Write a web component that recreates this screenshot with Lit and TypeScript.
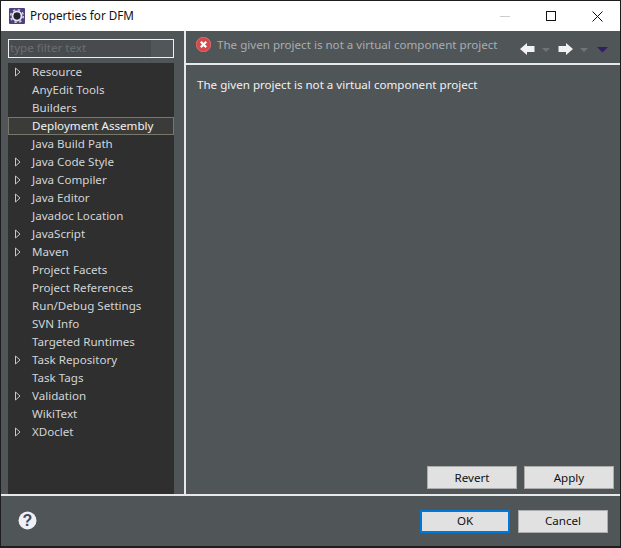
import { LitElement, html, css } from "lit";
import { customElement } from "lit/decorators.js";

const items: [string, boolean][] = [
  ["Resource", true], ["AnyEdit Tools", false], ["Builders", false], ["Deployment Assembly", false],
  ["Java Build Path", false], ["Java Code Style", true], ["Java Compiler", true], ["Java Editor", true],
  ["Javadoc Location", false], ["JavaScript", true], ["Maven", true], ["Project Facets", false],
  ["Project References", false], ["Run/Debug Settings", false], ["SVN Info", false], ["Targeted Runtimes", false],
  ["Task Repository", true], ["Task Tags", false], ["Validation", true], ["WikiText", false], ["XDoclet", true],
];

const MSG = "The given project is not a virtual component project";

@customElement("app-root")
export class AppRoot extends LitElement {
  static styles = css`
    :host { display: block; width: 621px; height: 548px; font-family: "Noto Sans", "Open Sans", sans-serif; font-size: 11.6px; color: #e6e8ea; }
    .win { box-sizing: border-box; width: 621px; height: 548px; background: #505558; border: 1px solid #1e1e1e; border-bottom-width: 2px; display: flex; flex-direction: column; }
    .title { height: 30px; background: #fff; display: flex; align-items: center; flex: none; color: #111; padding-left: 8px; }
    .title .name { flex: 1; margin: 0 0 2px 5px; font-size: 11.7px; }
    .ctl { width: 46px; height: 30px; display: flex; align-items: center; justify-content: center; }
    .main { flex: 1; min-height: 0; display: flex; border-bottom: 2px solid #e8e8e8; }
    .left { box-sizing: border-box; padding: 8px 0 0 7px; flex: none; display: flex; flex-direction: column; border-right: 2px solid #e8e8e8; width: 185px; }
    .filter { box-sizing: border-box; width: 166px; height: 19px; border: 1px solid #f0f0f0; background: #50565a; color: #6a6e71; line-height: 16px; }
    .filter span { display: block; width: 142px; height: 100%; background: #474b4e; padding-left: 1px; box-sizing: border-box; }
    .tree { margin-top: 5px; width: 166px; flex: 1; background: #2f2f2f; }
    .row { height: 18px; display: flex; align-items: center; box-sizing: border-box; padding: 0 0 2px 24px; position: relative; color: #d2d5d7; white-space: nowrap; }
    .row.sel { border: 1px solid #77786a; padding: 0 0 1px 23px; background: #3b3c3a; color: #f2f2f2; }
    .row svg { position: absolute; left: 6px; top: 4px; }
    .row.sel svg { left: 5px; top: 3px; }
    .right { flex: 1; min-width: 0; display: flex; flex-direction: column; }
    .head { height: 34px; flex: none; box-sizing: border-box; display: flex; align-items: center; border-bottom: 2px solid #e8e8e8; padding: 0 0 5px 10px; }
    .head .msg { flex: 1; color: #a9adb0; margin-left: 6px; white-space: nowrap; }
    .nav { display: flex; align-items: center; padding-right: 8px; margin-top: 8px; }
    .nav svg { display: block; }
    .body { flex: 1; padding: 12px 0 0 11px; color: #f0f2f3; display: flex; flex-direction: column; }
    .spacer { flex: 1; }
    .acts { display: flex; justify-content: flex-end; gap: 7px; padding: 0 6px 5px 0; }
    button { box-sizing: border-box; width: 90px; height: 23px; border: 1px solid #adadad; background: #e1e1e1; color: #111; font: inherit; padding: 0 0 1px; }
    button.def { border: 2px solid #0078d7; }
    .foot { height: 50px; flex: none; display: flex; align-items: center; padding: 0 12px 0 17px; gap: 8px; }
    .foot .grow { flex: 1; }
    .foot svg { display: block; margin-bottom: 2px; }
  `;

  tri() {
    return html`<svg width="8" height="10" viewBox="0 0 8 10"><path d="M1.5 1 L6 5 L1.5 9 Z" fill="#2f2f2f" stroke="#c8c8c8" stroke-width="1"/></svg>`;
  }

  render() {
    return html`<div class="win">
      <div class="title">
        <svg width="16" height="16" viewBox="0 0 16 16">
          <rect x="0" y="0" width="16" height="16" rx="1" fill="#4f3f80"/>
          <circle cx="8" cy="8" r="6.3" fill="none" stroke="#cfcfd4" stroke-width="1.6" stroke-dasharray="2.4 2.55"/>
          <circle cx="8" cy="8" r="4.4" fill="none" stroke="#e6e6ea" stroke-width="2"/>
          <circle cx="8" cy="8" r="3.4" fill="#23232e"/>
        </svg>
        <span class="name">Properties for DFM</span>
        <div class="ctl"><svg width="10" height="10"><path d="M0 5.5H10" stroke="#ccc"/></svg></div>
        <div class="ctl"><svg width="10" height="10"><rect x=".5" y=".5" width="9" height="9" fill="none" stroke="#111"/></svg></div>
        <div class="ctl"><svg width="11" height="11"><path d="M.5 .5L10.5 10.5M10.5 .5L.5 10.5" stroke="#111"/></svg></div>
      </div>
      <div class="main">
        <div class="left">
          <div class="filter"><span>type filter text</span></div>
          <div class="tree">
            ${items.map(([t, a]) => html`<div class="row ${t === "Deployment Assembly" ? "sel" : ""}">${a ? this.tri() : ""}${t}</div>`)}
          </div>
        </div>
        <div class="right">
          <div class="head">
            <svg width="15" height="15" viewBox="0 0 15 15"><circle cx="7.5" cy="7.5" r="7.3" fill="#d9474a"/><circle cx="7.5" cy="7.5" r="7.3" fill="none" stroke="#e88" stroke-width=".6"/><path d="M4.8 4.8L10.2 10.2M10.2 4.8L4.8 10.2" stroke="#fff" stroke-width="2.2"/></svg>
            <span class="msg">${MSG}</span>
            <div class="nav">
              <svg width="92" height="14" viewBox="0 0 92 14">
                <path d="M0 7L7 1V4H14.5V10H7V13Z" fill="#f2f2f2"/>
                <path d="M22 6H30L26 10Z" fill="#6f7477"/>
                <path d="M53 7L46 1V4H38.5V10H46V13Z" fill="#f2f2f2"/>
                <path d="M60 6H68L64 10Z" fill="#6f7477"/>
                <path d="M77 5H88L82.5 10.5Z" fill="#2e1f66"/>
              </svg>
            </div>
          </div>
          <div class="body">
            <div>${MSG}</div>
            <div class="spacer"></div>
            <div class="acts"><button>Revert</button><button>Apply</button></div>
          </div>
        </div>
      </div>
      <div class="foot">
        <svg width="19" height="19" viewBox="0 0 19 19"><circle cx="9.5" cy="9.5" r="9" fill="#f0f0f4"/><text x="9.5" y="15" text-anchor="middle" font-family="Liberation Sans" font-weight="700" font-size="16" fill="#3a4a6a">?</text></svg>
        <div class="grow"></div>
        <button class="def">OK</button><button>Cancel</button>
      </div>
    </div>`;
  }
}
